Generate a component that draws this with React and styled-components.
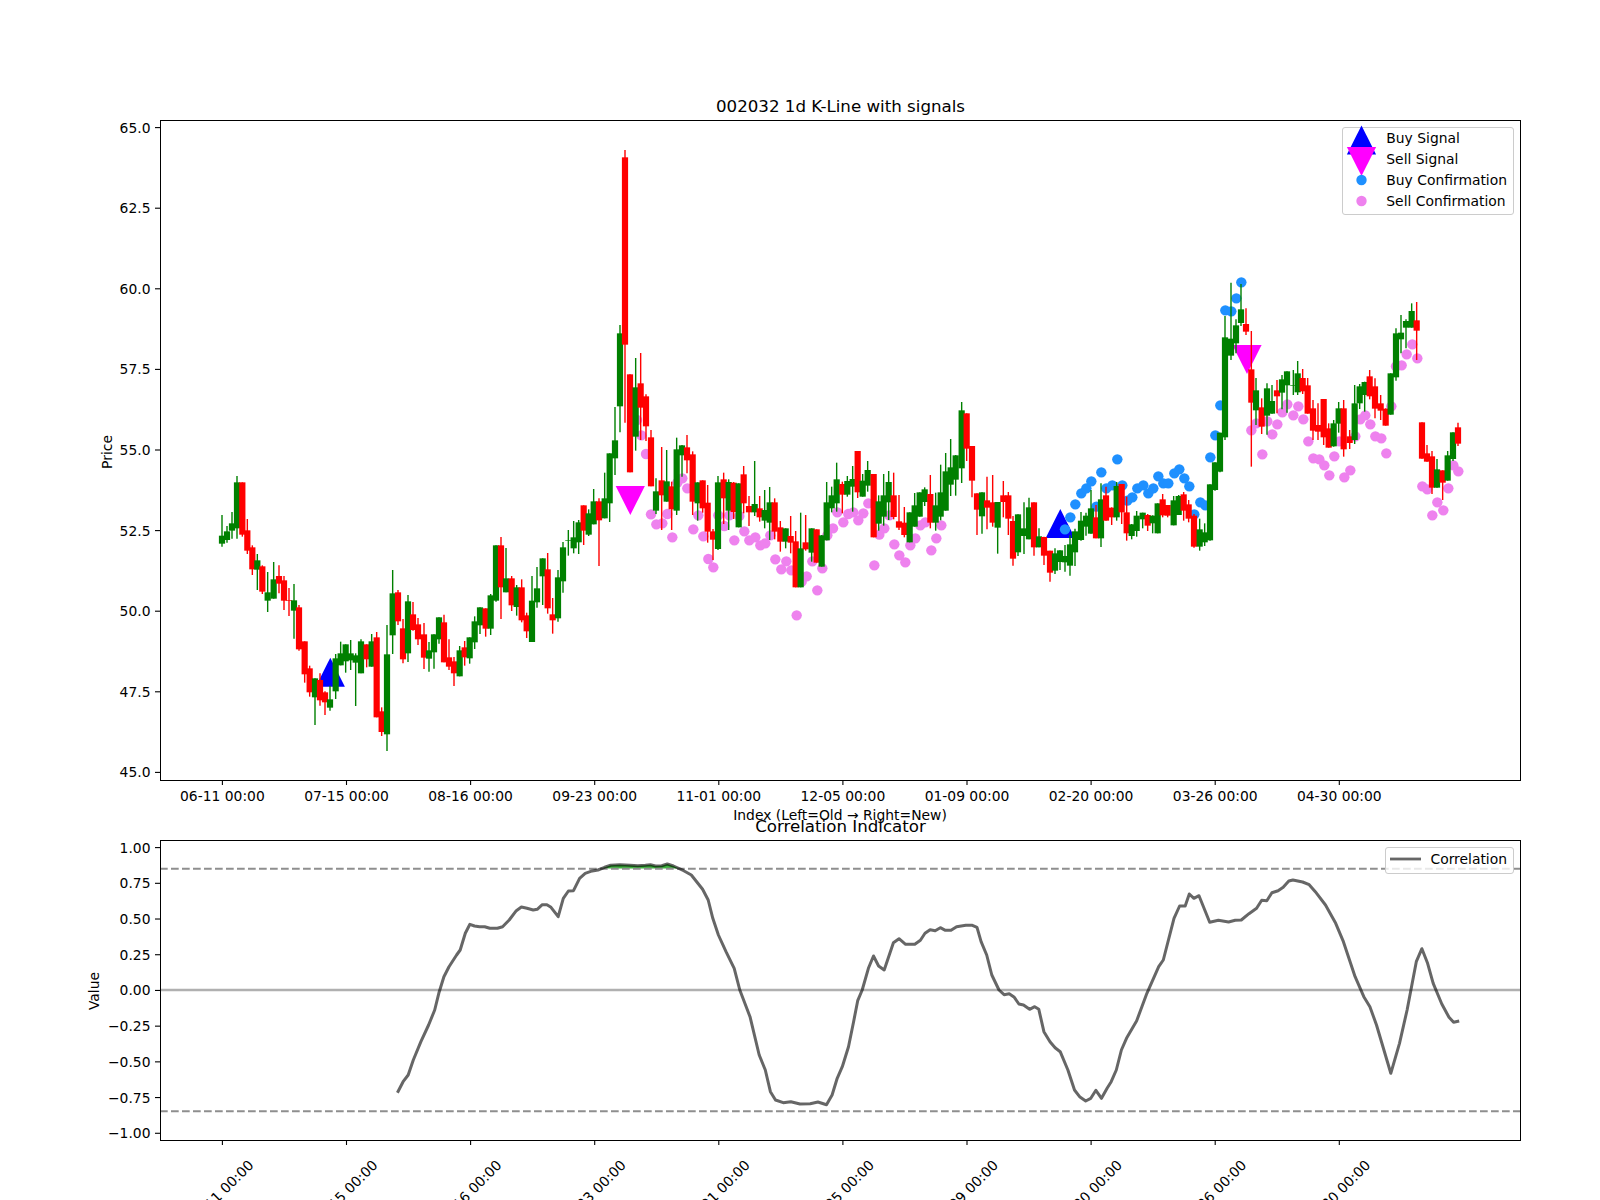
import React from "react";
import styled, { createGlobalStyle } from "styled-components";

const GlobalStyle = createGlobalStyle`
  html, body {
    margin: 0;
    padding: 0;
    background: #fff;
  }
`;

// rows are [x, colour, wick top, body top, body bottom, wick bottom], sampled at 3x around an origin
const sampled = (ox, oy, rows) =>
  rows.map(([x, c, wt, bt, bb, wb]) => ({
    x: ox + x / 3,
    up: c === "g",
    wickTop: oy + wt / 3,
    top: oy + bt / 3,
    bottom: oy + Math.max(bb, bt + 2) / 3,
    wickBottom: oy + wb / 3,
  }));

const candles = [
  ...sampled(200, 440, [
    [66, "g", 225, 287, 311, 320], [81, "g", 258, 274, 300, 308], [96, "g", 216, 250, 272, 296],
    [111, "g", 108, 127, 265, 296], [127, "r", 127, 127, 284, 290], [142, "r", 237, 271, 332, 342],
    [157, "r", 316, 322, 388, 405], [172, "g", 342, 361, 389, 450], [187, "r", 376, 379, 455, 462],
    [203, "g", 396, 457, 482, 516], [221, "g", 366, 418, 476, 476], [237, "r", 376, 408, 431, 460],
    [252, "r", 408, 421, 482, 510], [267, "r", 444, 480, 481, 528], [282, "g", 432, 481, 512, 596],
    [297, "r", 495, 502, 628, 632], [314, "r", 604, 604, 703, 728], [329, "r", 677, 685, 757, 770],
    [345, "g", 715, 715, 772, 855], [360, "r", 700, 720, 781, 797], [375, "r", 754, 757, 787, 825],
    [390, "g", 737, 778, 803, 812], [407, "g", 642, 655, 754, 777], [422, "g", 605, 640, 676, 676],
    [437, "g", 613, 613, 664, 698], [452, "g", 600, 640, 661, 690], [467, "g", 640, 646, 668, 798],
    [483, "g", 598, 604, 700, 700], [500, "r", 613, 613, 658, 682], [515, "g", 582, 604, 680, 680],
    [530, "r", 576, 592, 832, 832], [545, "r", 802, 814, 876, 888], [561, "g", 555, 643, 883, 933],
    [578, "g", 390, 460, 586, 642], [594, "r", 450, 457, 544, 555], [609, "r", 537, 565, 658, 670],
    [624, "g", 465, 484, 640, 666], [639, "r", 486, 523, 570, 572], [654, "r", 534, 553, 598, 615],
  ]),
  ...sampled(420, 440, [
    [12, "r", 549, 583, 653, 687], [27, "g", 606, 631, 656, 695], [42, "g", 583, 583, 637, 686],
    [57, "g", 532, 532, 598, 611], [72, "r", 524, 547, 667, 667], [87, "r", 598, 652, 680, 690],
    [102, "r", 651, 664, 700, 738], [119, "g", 618, 631, 709, 709], [134, "r", 603, 622, 652, 677],
    [149, "g", 592, 592, 655, 671], [164, "g", 529, 544, 607, 627], [180, "g", 502, 502, 556, 582],
    [197, "r", 505, 505, 566, 590], [212, "g", 462, 466, 566, 585], [228, "g", 316, 316, 482, 485],
    [243, "r", 291, 316, 442, 537], [258, "g", 324, 415, 457, 457], [275, "r", 408, 415, 496, 513],
    [290, "g", 435, 442, 501, 527], [305, "r", 418, 442, 541, 547], [320, "r", 518, 526, 574, 594],
    [336, "g", 408, 482, 606, 606], [351, "g", 381, 445, 487, 503], [368, "g", 355, 355, 409, 495],
    [383, "r", 339, 388, 505, 521], [398, "r", 474, 523, 541, 581], [414, "g", 390, 412, 535, 545],
    [429, "g", 306, 322, 424, 458], [445, "g", 270, 300, 301, 347], [461, "g", 243, 292, 325, 340],
    [476, "g", 240, 247, 307, 342], [491, "r", 196, 196, 272, 315], [506, "g", 208, 220, 284, 288],
    [521, "g", 147, 184, 253, 253], [537, "r", 175, 184, 241, 378], [554, "g", 98, 175, 235, 235],
    [569, "g", 40, 40, 190, 246],
  ]),
  ...sampled(590, 130, [
    [75, "g", 831, 931, 985, 1035], [90, "g", 585, 610, 829, 907], [105, "r", 60, 82, 644, 878],
    [120, "r", 733, 733, 1027, 1027], [137, "g", 684, 772, 920, 962], [152, "r", 669, 760, 833, 930],
    [168, "r", 793, 799, 889, 933], [183, "r", 900, 922, 1069, 1069], [198, "g", 1045, 1084, 1142, 1152],
    [215, "r", 951, 1051, 1096, 1200], [230, "g", 960, 1054, 1115, 1115], [245, "r", 1055, 1069, 1138, 1200],
    [260, "g", 923, 958, 1142, 1155], [276, "g", 945, 946, 976, 1040], [291, "r", 915, 952, 991, 1030],
    [308, "r", 964, 973, 1115, 1155], [323, "g", 1057, 1057, 1120, 1172], [338, "r", 1051, 1051, 1135, 1148],
    [353, "r", 1065, 1118, 1205, 1238], [369, "r", 1197, 1204, 1229, 1290], [384, "g", 1038, 1057, 1257, 1260],
    [401, "r", 1028, 1048, 1105, 1182], [416, "g", 1048, 1056, 1142, 1200], [431, "r", 1056, 1058, 1146, 1167],
    [446, "g", 1060, 1060, 1192, 1192], [461, "r", 1008, 1033, 1120, 1150], [477, "r", 1098, 1128, 1147, 1188],
    [494, "g", 993, 1122, 1147, 1158], [509, "r", 1098, 1135, 1162, 1175], [524, "g", 1080, 1140, 1172, 1195],
    [539, "g", 1071, 1117, 1178, 1230], [554, "r", 1105, 1117, 1205, 1228], [571, "r", 1173, 1192, 1235, 1265],
    [587, "g", 1195, 1195, 1235, 1255], [602, "r", 1158, 1218, 1238, 1270], [617, "r", 1203, 1234, 1372, 1372],
    [632, "g", 1148, 1255, 1372, 1372], [647, "r", 1155, 1237, 1258, 1262], [665, "g", 1195, 1195, 1268, 1295],
    [680, "r", 1198, 1198, 1298, 1298], [695, "g", 1215, 1216, 1310, 1310], [710, "g", 1056, 1117, 1231, 1231],
    [725, "g", 1070, 1096, 1135, 1147], [740, "g", 998, 1048, 1120, 1145], [757, "r", 1055, 1062, 1094, 1150],
    [772, "g", 1038, 1053, 1094, 1100],
  ]),
  ...sampled(840, 380, [
    [38, "g", 258, 297, 320, 395], [53, "r", 213, 213, 337, 354], [68, "g", 282, 302, 350, 350],
    [83, "g", 243, 270, 317, 335], [101, "r", 282, 282, 472, 472], [116, "g", 346, 364, 431, 452],
    [131, "g", 282, 346, 410, 437], [146, "g", 273, 306, 367, 420], [161, "r", 278, 346, 411, 418],
    [177, "r", 345, 424, 443, 450], [193, "r", 381, 428, 465, 472], [209, "g", 397, 397, 487, 487],
    [224, "g", 339, 376, 440, 440], [239, "g", 337, 337, 410, 410], [254, "g", 322, 328, 366, 378],
    [271, "r", 285, 342, 428, 445], [287, "g", 338, 376, 428, 452], [302, "g", 254, 337, 410, 421],
    [317, "g", 219, 274, 392, 392], [332, "g", 177, 262, 314, 348], [347, "g", 225, 226, 299, 347],
    [365, "g", 66, 91, 265, 309], [380, "r", 100, 100, 206, 243], [396, "r", 198, 198, 302, 352],
    [411, "r", 340, 340, 389, 465], [426, "g", 337, 337, 409, 461], [441, "r", 290, 361, 383, 448],
    [458, "r", 285, 367, 428, 440], [473, "g", 366, 366, 443, 521], [490, "r", 303, 346, 366, 412],
    [505, "r", 336, 346, 416, 465], [519, "r", 408, 423, 536, 557], [534, "g", 403, 403, 517, 528],
    [552, "g", 367, 445, 468, 522], [567, "g", 353, 382, 478, 478], [582, "r", 367, 367, 502, 527],
    [597, "g", 445, 469, 502, 502], [612, "r", 470, 471, 527, 555], [630, "r", 512, 512, 578, 605],
    [645, "g", 505, 520, 572, 582], [660, "g", 511, 511, 546, 570], [675, "g", 495, 528, 547, 575],
    [690, "g", 466, 493, 557, 587], [705, "g", 446, 454, 517, 558],
  ]),
  ...sampled(1040, 420, [
    [123, "g", 276, 302, 360, 362], [138, "g", 278, 287, 320, 347], [153, "g", 210, 265, 341, 341],
    [168, "r", 255, 292, 355, 355], [183, "g", 190, 238, 355, 381], [198, "r", 200, 226, 302, 302],
    [215, "r", 262, 263, 292, 315], [230, "g", 186, 198, 292, 302], [245, "r", 192, 192, 277, 312],
    [260, "r", 230, 277, 340, 362], [275, "g", 312, 313, 348, 358], [290, "g", 273, 287, 333, 350],
    [308, "g", 278, 278, 298, 325], [323, "r", 282, 285, 317, 333], [338, "g", 286, 287, 310, 340],
    [353, "g", 250, 250, 340, 340], [368, "r", 222, 238, 286, 292], [383, "r", 255, 255, 287, 292],
    [401, "g", 228, 241, 316, 316], [416, "g", 225, 228, 285, 285], [431, "r", 216, 223, 272, 302],
    [446, "r", 240, 253, 296, 307], [462, "r", 282, 287, 380, 383], [479, "g", 296, 328, 380, 392],
    [494, "g", 310, 337, 367, 378], [510, "g", 193, 193, 361, 362], [525, "g", 127, 127, 210, 212],
    [540, "g", 38, 38, 155, 157],
  ]),
  ...sampled(1190, 260, [
    [105, "g", 168, 232, 532, 540], [123, "g", 68, 236, 287, 300], [138, "g", 178, 196, 250, 280],
    [153, "g", 72, 148, 189, 198], [168, "r", 145, 192, 215, 225], [184, "r", 213, 328, 428, 620],
    [198, "g", 354, 391, 451, 495], [215, "r", 415, 442, 500, 522], [231, "g", 370, 385, 467, 524],
    [246, "g", 375, 423, 461, 461], [261, "r", 360, 391, 409, 460], [276, "g", 345, 358, 398, 448],
    [291, "g", 334, 334, 376, 458], [310, "g", 330, 375, 376, 405], [323, "g", 303, 340, 397, 405],
    [338, "r", 327, 354, 394, 402], [353, "r", 354, 376, 461, 461], [369, "r", 420, 445, 512, 540],
    [384, "r", 430, 495, 515, 540], [401, "r", 417, 417, 532, 555], [416, "r", 490, 505, 563, 563],
    [431, "g", 480, 490, 559, 560], [446, "g", 426, 445, 491, 518], [461, "r", 420, 445, 568, 590],
    [479, "r", 510, 529, 549, 567], [494, "g", 375, 430, 540, 552], [509, "g", 372, 379, 430, 447],
    [524, "g", 365, 366, 405, 455], [539, "r", 330, 349, 409, 418], [555, "r", 355, 379, 446, 475],
    [572, "r", 405, 430, 452, 480], [587, "r", 445, 446, 497, 497], [602, "g", 340, 340, 464, 464],
    [618, "g", 205, 220, 352, 362], [633, "g", 165, 218, 238, 280], [648, "g", 178, 183, 203, 265],
    [665, "g", 130, 153, 203, 203], [680, "r", 126, 181, 212, 300], [696, "r", 487, 487, 596, 596],
    [711, "r", 555, 580, 605, 605], [726, "r", 573, 589, 683, 702], [741, "g", 597, 628, 683, 683],
    [758, "r", 631, 631, 668, 720], [773, "g", 573, 586, 662, 662], [789, "g", 517, 517, 597, 603],
    [804, "r", 488, 502, 551, 558],
  ]),
];

const dots = (ox, oy, pts) => pts.map(([x, y]) => [ox + x / 3, oy + y / 3]);

const sellDots = [
  ...dots(590, 130, [
    [141, 870], [154, 916], [168, 972], [183, 1153], [199, 1183], [217, 1180], [232, 1152], [247, 1222],
    [262, 1058], [277, 1045], [292, 1075], [310, 1198], [325, 1156], [340, 1219], [355, 1287], [370, 1312],
    [385, 1156], [403, 1188], [418, 1156], [433, 1231], [448, 1158], [463, 1204], [478, 1231], [496, 1222],
    [511, 1246], [526, 1240], [541, 1216], [556, 1288], [574, 1318], [589, 1294], [604, 1321], [620, 1456],
    [635, 1355], [650, 1339], [667, 1294], [682, 1381], [697, 1315], [712, 1216], [729, 1195], [742, 1147],
    [760, 1177], [775, 1152],
  ]),
  ...dots(840, 380, [
    [40, 397], [55, 421], [70, 400], [85, 370], [103, 556], [118, 464], [133, 445], [148, 406], [163, 493],
    [178, 526], [196, 547], [211, 496], [226, 475], [241, 436], [256, 427], [274, 511], [289, 475], [304, 436],
  ]),
  ...dots(1190, 260, [
    [184, 511], [199, 490], [217, 583], [232, 484], [247, 523], [262, 493], [277, 457], [292, 433], [310, 466],
    [325, 439], [340, 478], [355, 544], [370, 595], [388, 598], [403, 616], [418, 646], [433, 589], [448, 544],
    [463, 652], [481, 631], [496, 529], [511, 478], [526, 466], [541, 493], [556, 529], [574, 535], [589, 580],
    [604, 439], [618, 319], [635, 316], [650, 283], [667, 253], [682, 295], [697, 679], [712, 688], [727, 766],
    [742, 727], [760, 751], [775, 685], [790, 616], [805, 634],
  ]),
];

const buyDots = [
  ...dots(1040, 420, [
    [75, 328], [91, 292], [106, 253], [124, 220], [139, 205], [154, 184], [169, 260], [184, 157], [199, 205],
    [217, 196], [232, 118], [247, 196], [262, 242], [277, 232], [292, 205], [310, 196], [325, 220], [340, 205],
    [355, 169], [370, 190], [385, 190], [403, 160], [418, 148], [433, 175], [448, 199], [463, 283], [481, 247],
    [496, 256],
  ]),
  ...dots(1190, 260, [[61, 592], [76, 526], [91, 436], [106, 151], [124, 154], [139, 115], [154, 67]]),
];

const buySignals = [[330.3, 657.7], [1060.3, 509]];
const sellSignals = [[630.3, 515], [1247, 374]];

const corrLeft = [
  [779, 938], [790, 905], [800, 885], [810, 840], [825, 785], [840, 735], [852, 690], [860, 640], [870, 590],
  [880, 560], [895, 525], [902, 510], [912, 460], [921, 433], [930, 438], [940, 440], [950, 440], [960, 445],
  [975, 445], [985, 440], [998, 420], [1012, 392], [1022, 381], [1033, 385], [1045, 390], [1053, 388],
  [1063, 374], [1072, 374], [1080, 382], [1094, 410], [1104, 355], [1114, 333], [1124, 332], [1136, 295],
  [1147, 280], [1158, 274], [1172, 270], [1185, 262], [1197, 256], [1215, 254], [1235, 256], [1250, 257],
  [1265, 256], [1275, 254], [1285, 258], [1297, 257], [1308, 252], [1320, 258], [1340, 272], [1355, 285],
  [1377, 328], [1388, 360], [1397, 415], [1408, 465], [1423, 515], [1439, 565], [1450, 630], [1470, 710],
  [1488, 825], [1500, 870], [1510, 935], [1520, 960], [1535, 968], [1550, 965], [1568, 972],
];
const corrRight = [
  [20, 971], [35, 966], [52, 974], [63, 945], [73, 895], [83, 860], [95, 800], [105, 725], [113, 662], [122, 630],
  [134, 565], [144, 528], [154, 558], [165, 570], [183, 488], [194, 476], [207, 493], [225, 493], [236, 481],
  [245, 460], [255, 449], [265, 452], [275, 443], [285, 451], [296, 451], [307, 440], [325, 436], [338, 436],
  [347, 442], [355, 485], [366, 525], [376, 585], [390, 630], [400, 644], [410, 641], [420, 652], [429, 672],
  [438, 675], [450, 688], [460, 680], [468, 688], [478, 755], [490, 785], [500, 803], [510, 815], [525, 870],
  [538, 930], [548, 950], [560, 963], [570, 955], [580, 931], [591, 955], [602, 925], [610, 905], [620, 870],
  [630, 810], [640, 775], [660, 722], [680, 640], [703, 560], [712, 540], [733, 415], [744, 378], [755, 378],
  [763, 342], [772, 355], [782, 347], [803, 427], [820, 421], [840, 426], [853, 421], [865, 420], [880, 401],
  [895, 385], [905, 361], [915, 362], [925, 338], [937, 332], [947, 322], [958, 303], [966, 300], [985, 306],
  [998, 314], [1010, 335], [1030, 375], [1050, 430], [1065, 485], [1088, 590], [1105, 650], [1117, 680],
  [1130, 735], [1158, 880], [1175, 790], [1190, 690], [1208, 545], [1219, 506], [1230, 550], [1241, 610],
  [1258, 672], [1272, 712], [1281, 727], [1292, 723],
];
const corrPoints = [
  ...corrLeft.map(([x, y]) => [x / 1.96, 780 + y / 3]),
  ...corrRight.map(([x, y]) => [800 + x / 1.96, 780 + y / 3]),
];
const toPoints = (pts) => pts.map(([x, y]) => `${x.toFixed(1)},${y.toFixed(1)}`).join(" ");

const tickDates = [
  "06-11 00:00", "07-15 00:00", "08-16 00:00", "09-23 00:00", "11-01 00:00",
  "12-05 00:00", "01-09 00:00", "02-20 00:00", "03-26 00:00", "04-30 00:00",
];
const tickX = (i) => 222.4 + i * 124.1;

const priceTicks = ["65.0", "62.5", "60.0", "57.5", "55.0", "52.5", "50.0", "47.5", "45.0"];
const priceY = (i) => 127.6 + i * 80.6;
const corrTicks = ["1.00", "0.75", "0.50", "0.25", "0.00", "−0.25", "−0.50", "−0.75", "−1.00"];
const corrY = (i) => 847.6 + i * 35.71;

const Figure = styled.div`
  width: 1600px;
  height: 1200px;
  box-sizing: border-box;
  padding: 95px 0 0 160px;
  background: #fff;
  overflow: hidden;
  font-family: "DejaVu Sans", sans-serif;
  color: #000;
`;

const ChartBlock = styled.section`
  width: 1361px;
  margin-top: ${({ $gap }) => $gap || 0}px;
`;

const ChartTitle = styled.h2`
  position: relative;
  z-index: 1;
  margin: 0 0 1px;
  height: 24px;
  line-height: 24px;
  font-size: 16.67px;
  font-weight: 400;
  text-align: center;
`;

const Panel = styled.div`
  position: relative;
  height: ${({ $height }) => $height}px;
  outline: 1px solid #000;
  outline-offset: -1px;
`;

const Plot = styled.svg`
  display: block;
  width: 100%;
  height: 100%;
  overflow: visible;

  text {
    font-family: "DejaVu Sans", sans-serif;
    font-size: 13.89px;
    fill: #000;
  }
`;

const Legend = styled.div`
  position: absolute;
  top: 7px;
  right: 7px;
  box-sizing: border-box;
  display: flex;
  flex-direction: column;
  padding: ${({ $pad }) => $pad || "0 6px 3px 4px"};
  border: 1px solid #ccc;
  border-radius: 3px;
  background: rgba(255, 255, 255, 0.8);
`;

const LegendRow = styled.div`
  display: flex;
  align-items: center;
  gap: ${({ $gap }) => $gap}px;
  height: 20.75px;
  font-size: 13.89px;
  white-space: nowrap;
`;

const Swatch = styled.svg`
  display: block;
  flex: none;
  overflow: visible;
`;

const Candle = ({ c }) => {
  const color = c.up ? "#008000" : "#ff0000";
  return (
    <g>
      <line x1={c.x} x2={c.x} y1={c.wickTop} y2={c.wickBottom} stroke={color} strokeWidth="1.4" />
      <rect x={c.x - 3.1} y={c.top} width="6.2" height={c.bottom - c.top} fill={color} />
    </g>
  );
};

const upTriangle = (x, y) => `${x},${y} ${x + 14.6},${y + 29} ${x - 14.6},${y + 29}`;
const downTriangle = (x, y) => `${x},${y} ${x + 14.6},${y - 29} ${x - 14.6},${y - 29}`;

const PriceChart = () => (
  <Plot viewBox="160 120 1361 661">
    {sellSignals.map(([x, y]) => <polygon key={x} points={downTriangle(x, y)} fill="#ff00ff" />)}
    {buySignals.map(([x, y]) => <polygon key={x} points={upTriangle(x, y)} fill="#0000ff" />)}
    {sellDots.map(([x, y], i) => <circle key={i} cx={x} cy={y} r="5.2" fill="#ee82ee" />)}
    {buyDots.map(([x, y], i) => <circle key={i} cx={x} cy={y} r="5.2" fill="#1e90ff" />)}
    {candles.map((c, i) => <Candle key={i} c={c} />)}

    {priceTicks.map((label, i) => (
      <g key={label}>
        <line x1="155" x2="160" y1={priceY(i)} y2={priceY(i)} stroke="#000" strokeWidth="1.1" />
        <text x="150.5" y={priceY(i)} textAnchor="end" dominantBaseline="central">{label}</text>
      </g>
    ))}
    {tickDates.map((label, i) => (
      <g key={label}>
        <line x1={tickX(i)} x2={tickX(i)} y1="780" y2="785" stroke="#000" strokeWidth="1.1" />
        <text x={tickX(i)} y="796" textAnchor="middle" dominantBaseline="central">{label}</text>
      </g>
    ))}
    <text x="840" y="815" textAnchor="middle" dominantBaseline="central">Index (Left=Old → Right=New)</text>
    <text transform="translate(107 452) rotate(-90)" textAnchor="middle" dominantBaseline="central">Price</text>
  </Plot>
);

const CorrelationChart = () => (
  <Plot viewBox="160 840 1361 301">
    <defs>
      <clipPath id="above-band">
        <rect x="160" y="840" width="1361" height="28.6" />
      </clipPath>
    </defs>
    <line x1="160" x2="1520" y1="990" y2="990" stroke="#b0b0b0" strokeWidth="2.4" />
    <polygon points={toPoints(corrPoints)} fill="#3cb43c" clipPath="url(#above-band)" />
    <line x1="160" x2="1520" y1="868.7" y2="868.7" stroke="#8e8e8e" strokeWidth="2" strokeDasharray="7.7 3.3" />
    <line x1="160" x2="1520" y1="1111.3" y2="1111.3" stroke="#8e8e8e" strokeWidth="2" strokeDasharray="7.7 3.3" />
    <polyline points={toPoints(corrPoints)} fill="none" stroke="#000" strokeOpacity="0.6" strokeWidth="3" strokeLinejoin="round" />

    {corrTicks.map((label, i) => (
      <g key={label}>
        <line x1="155" x2="160" y1={corrY(i)} y2={corrY(i)} stroke="#000" strokeWidth="1.1" />
        <text x="150.5" y={corrY(i)} textAnchor="end" dominantBaseline="central">{label}</text>
      </g>
    ))}
    {tickDates.map((label, i) => (
      <g key={label}>
        <line x1={tickX(i)} x2={tickX(i)} y1="1140" y2="1145" stroke="#000" strokeWidth="1.1" />
        <text
          transform={`translate(${tickX(i) - 1.5} 1192.5) rotate(-45)`}
          textAnchor="middle"
          dominantBaseline="central"
        >
          {label}
        </text>
      </g>
    ))}
    <text transform="translate(93.5 991) rotate(-90)" textAnchor="middle" dominantBaseline="central">Value</text>
  </Plot>
);

const TriangleMark = ({ color, down }) => (
  <Swatch width="29" height="20" viewBox="-14.5 -10 29 20">
    <polygon
      points={down ? "0,17 14.6,-12 -14.6,-12" : "0,-12.5 14.6,16.5 -14.6,16.5"}
      fill={color}
    />
  </Swatch>
);

const DotMark = ({ color }) => (
  <Swatch width="29" height="20" viewBox="-14.5 -10 29 20">
    <circle cx="0" cy="0" r="5.2" fill={color} />
  </Swatch>
);

const LineMark = () => (
  <Swatch width="31" height="4" viewBox="0 0 31 4">
    <line x1="0" x2="31" y1="2" y2="2" stroke="#666" strokeWidth="2.8" />
  </Swatch>
);

const App = () => (
  <>
    <GlobalStyle />
    <Figure>
      <ChartBlock>
        <ChartTitle>002032 1d K-Line with signals</ChartTitle>
        <Panel $height={661}>
          <PriceChart />
          <Legend>
            <LegendRow $gap={10}><TriangleMark color="#0000ff" />Buy Signal</LegendRow>
            <LegendRow $gap={10}><TriangleMark color="#ff00ff" down />Sell Signal</LegendRow>
            <LegendRow $gap={10}><DotMark color="#1e90ff" />Buy Confirmation</LegendRow>
            <LegendRow $gap={10}><DotMark color="#ee82ee" />Sell Confirmation</LegendRow>
          </Legend>
        </Panel>
      </ChartBlock>
      <ChartBlock $gap={34}>
        <ChartTitle>Correlation Indicator</ChartTitle>
        <Panel $height={301}>
          <CorrelationChart />
          <Legend $pad="1px 6px 3px 4px">
            <LegendRow $gap={9}><LineMark />Correlation</LegendRow>
          </Legend>
        </Panel>
      </ChartBlock>
    </Figure>
  </>
);

export default App;
